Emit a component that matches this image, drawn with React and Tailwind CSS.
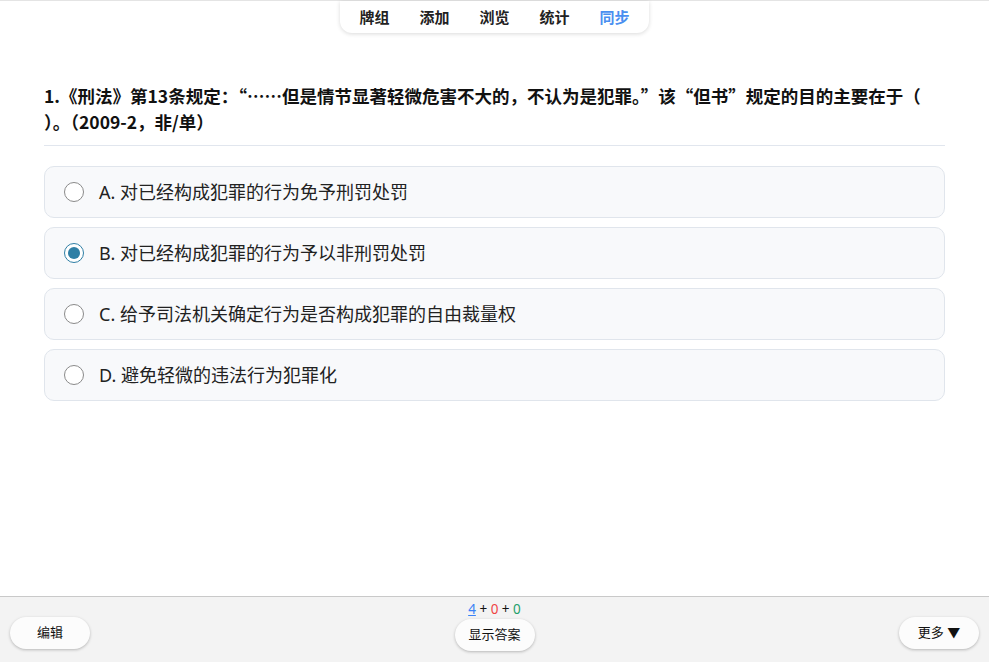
import { useState } from 'react';

const tabs = ['牌组', '添加', '浏览', '统计', '同步'];

const options = [
  'A. 对已经构成犯罪的行为免予刑罚处罚',
  'B. 对已经构成犯罪的行为予以非刑罚处罚',
  'C. 给予司法机关确定行为是否构成犯罪的自由裁量权',
  'D. 避免轻微的违法行为犯罪化',
];

export default function App() {
  const [picked, setPicked] = useState(1);

  return (
    <div
      className="w-[989px] h-[662px] bg-white flex flex-col border-t border-[#e4e4e4] text-[#111]"
      style={{ fontFamily: '"Noto Sans", "Noto Sans CJK SC", sans-serif' }}
    >
      {/* Top tabs */}
      <div className="flex justify-center">
        <div className="flex items-center h-[32px] px-[19px] gap-[30px] bg-white rounded-b-[12px] shadow-[0_1px_4px_rgba(0,0,0,0.15)]">
          {tabs.map((t, i) => (
            <span
              key={t}
              className={`text-[15px] font-bold ${i === 4 ? 'text-[#4a8ff0]' : 'text-[#222]'}`}
            >
              {t}
            </span>
          ))}
        </div>
      </div>

      {/* Question */}
      <div className="flex-1 px-[44px] pt-[50px]">
        <div
          className="text-[17.5px] font-bold leading-[26px] pb-[10px] border-b border-[#e1e6ee]"
          style={{ fontFamily: '"Noto Sans CJK SC", sans-serif' }}
        >
          1.《刑法》第13条规定：“……但是情节显著轻微危害不大的，不认为是犯罪。”该“但书”规定的目的主要在于（ ）。（2009-2，非/单）
        </div>

        <div className="flex flex-col gap-[9px] mt-[20px]">
          {options.map((o, i) => (
            <button
              key={o}
              onClick={() => setPicked(i)}
              className="h-[52px] flex items-center gap-[15px] px-[19px] rounded-[10px] border border-[#e0e5ec] bg-[#f8f9fb] text-left"
            >
              <span
                className={`w-[20px] h-[20px] rounded-full flex items-center justify-center bg-white border ${
                  picked === i ? 'border-[#2f7fa5] border-[1.5px]' : 'border-[#8a8a8a]'
                }`}
              >
                {picked === i && <span className="w-[12px] h-[12px] rounded-full bg-[#2f7fa5]" />}
              </span>
              <span className="text-[18px] text-[#222]">{o}</span>
            </button>
          ))}
        </div>
      </div>

      {/* Bottom bar */}
      <div className="h-[66px] bg-[#f3f3f3] border-t border-[#c9c9c9] flex items-start justify-between px-[10px]">
        <button className="mt-[20px] w-[80px] h-[32px] rounded-full bg-[#fcfcfc] shadow-[0_1px_3px_rgba(0,0,0,0.25)] text-[13px]">
          编辑
        </button>
        <div className="flex flex-col items-center">
          <div className="text-[13.5px] leading-[16px] mt-[4px]">
            <span className="text-[#3b82f6] underline">4</span>
            <span> + </span>
            <span className="text-[#ef4444]">0</span>
            <span> + </span>
            <span className="text-[#22a06b]">0</span>
          </div>
          <button className="mt-[2px] w-[80px] h-[32px] rounded-full bg-[#fcfcfc] shadow-[0_1px_3px_rgba(0,0,0,0.25)] text-[13px]">
            显示答案
          </button>
        </div>
        <button className="mt-[20px] w-[80px] h-[32px] rounded-full bg-[#fcfcfc] shadow-[0_1px_3px_rgba(0,0,0,0.25)] text-[13px]">
          更多 ▼
        </button>
      </div>
    </div>
  );
}
